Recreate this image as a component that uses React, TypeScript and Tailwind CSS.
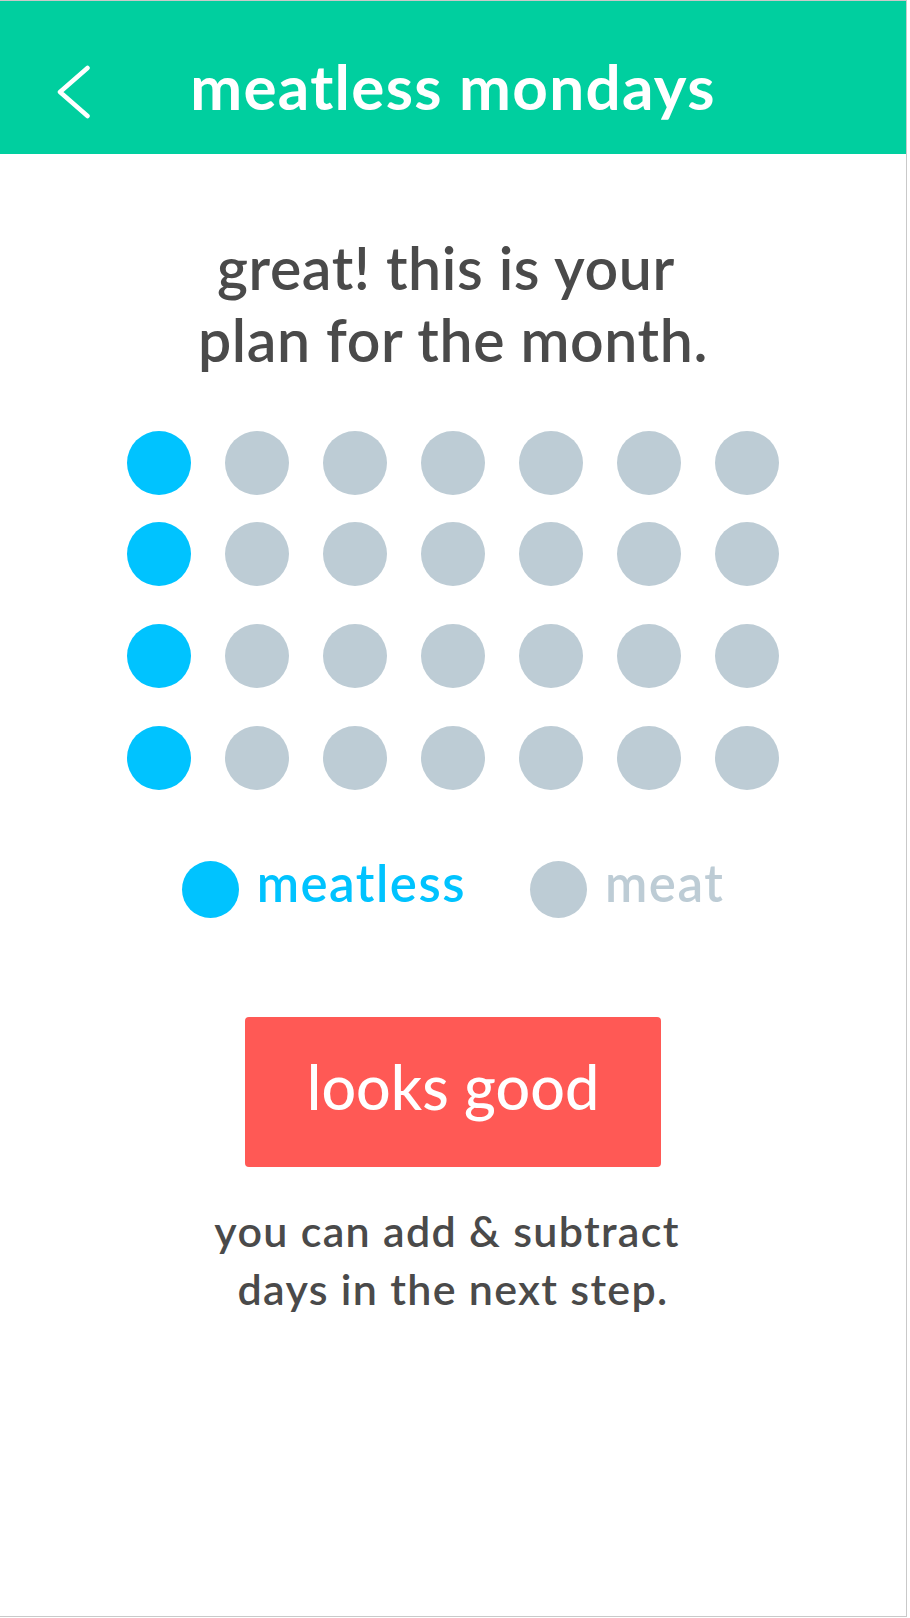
import React from 'react';

const weeks = [0, 1, 2, 3];
const days = [0, 1, 2, 3, 4, 5, 6];

// first day of every week is the meatless one
const Dot = ({ meatless }: { meatless: boolean }) => (
  <div className={`w-16 h-16 rounded-full ${meatless ? 'bg-[#00c3ff]' : 'bg-[#bdccd5]'}`} />
);

const App: React.FC = () => {
  return (
    <div className="w-[907px] h-[1617px] bg-white border-r border-b border-t border-[#c9c9c9] font-['Lato','Liberation_Sans',sans-serif]">
      {/* Header */}
      <div className="h-[153px] bg-[#00cf9f] flex items-center pt-[28px] relative">
        <button className="ml-[56px] w-[36px] h-[56px] flex items-center justify-center">
          <svg width="34" height="56" viewBox="0 0 34 56" fill="none">
            <path d="M30.5 4 L3 28 L30.5 52" stroke="#ffffff" strokeWidth="4.5" strokeLinecap="round" strokeLinejoin="round" />
          </svg>
        </button>
        <h1 className="absolute inset-x-0 top-[17px] bottom-0 flex items-center justify-center text-white text-[62px] font-bold tracking-[1.3px] pointer-events-none">
          meatless mondays
        </h1>
      </div>

      {/* Heading */}
      <div className="pt-[78px] text-center text-[#4a4a4a] text-[59px] font-semibold leading-[72px] tracking-[0.6px]">
        <p>great! this is your{'\u00a0'}</p>
        <p>plan for the month.</p>
      </div>

      {/* Month plan */}
      <div className="mt-[55px] flex flex-col items-center">
        {weeks.map((w) => (
          <div key={w} className={`flex gap-[34px] ${w === 0 ? '' : w === 1 ? 'mt-[27px]' : 'mt-[38px]'}`}>
            {days.map((d) => (
              <Dot key={d} meatless={d === 0} />
            ))}
          </div>
        ))}
      </div>

      {/* Legend */}
      <div className="mt-[64px] flex items-center justify-center">
        <div className="w-[57px] h-[57px] rounded-full bg-[#00c3ff]" />
        <span className="ml-[18px] mb-[14px] text-[51px] leading-[57px] font-semibold tracking-[1.5px] text-[#00c3ff]">meatless</span>
        <div className="ml-[64px] w-[57px] h-[57px] rounded-full bg-[#bdccd5]" />
        <span className="ml-[18px] mb-[14px] text-[51px] leading-[57px] font-semibold tracking-[1.5px] text-[#bdccd5]">meat</span>
      </div>

      {/* Confirm */}
      <div className="mt-[92px] flex justify-center">
        <button className="w-[416px] h-[150px] pb-[11px] rounded-[4px] bg-[#ff5955] text-white text-[61px] font-medium">
          looks good
        </button>
      </div>

      <div className="mt-[35px] text-center text-[#4a4a4a] text-[43px] font-semibold leading-[58px] tracking-[1.3px]">
        <p>you can add &amp; subtract{'\u00a0'}</p>
        <p>days in the next step.</p>
      </div>
    </div>
  );
};

export default App;
